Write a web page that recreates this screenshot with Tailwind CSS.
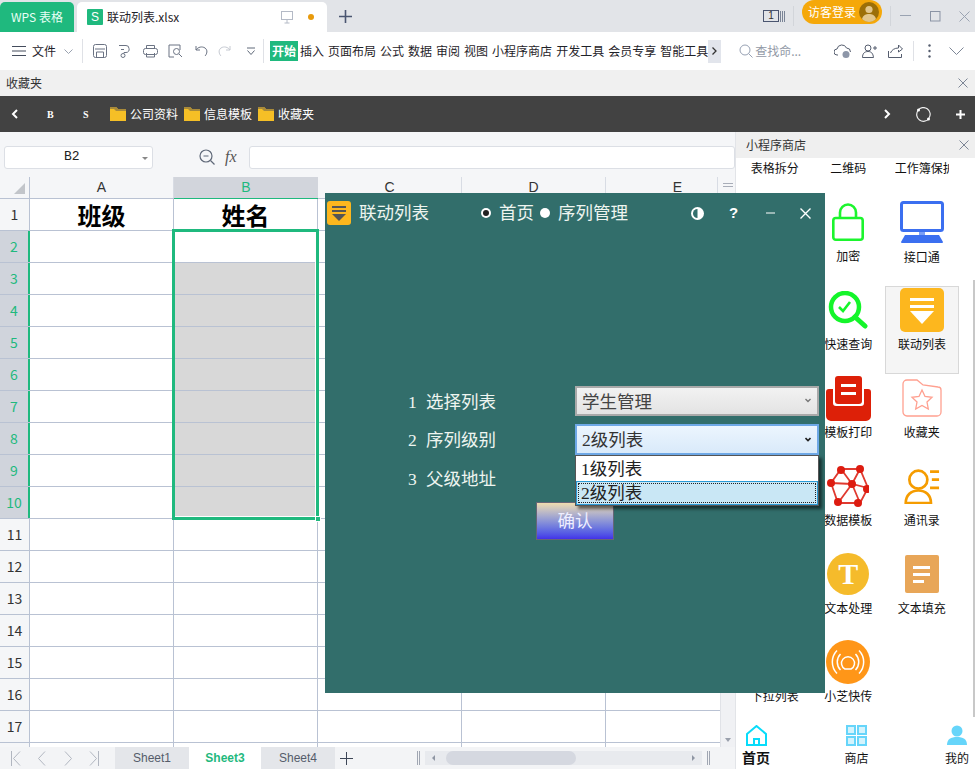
<!DOCTYPE html>
<html>
<head>
  <title>联动列表.xlsx</title>
  <meta charset="utf-8">
  <script src="https://cdn.jsdelivr.net/npm/@tailwindcss/browser@4"></script>
</head>
<body class="w-[975px] h-[769px] overflow-hidden relative bg-white font-['Noto_Sans_CJK_SC','Noto_Sans',sans-serif] text-[12px] text-[#1f2329]">

  <!-- Title bar -->
  <div class="h-[32px] bg-[#e2e4e8] flex items-end">
    <div class="w-[74px] h-[30px] bg-[#1fb97e] rounded-t-[5px] text-[#e8fff5] text-[12px] flex items-center justify-center">WPS 表格</div>
    <div class="ml-[3px] w-[250px] h-[30px] bg-white rounded-t-[5px] flex items-center pl-[10px]">
      <div class="w-[16px] h-[16px] bg-[#1fb97e] rounded-[1px] text-white text-[12px] leading-[16px] text-center font-['Liberation_Sans',sans-serif]">S</div>
      <span class="ml-[4px]">联动列表.xlsx</span>
      <svg class="ml-[102px]" width="12" height="14" viewBox="0 0 12 14" fill="none" stroke="#b4bac6"><rect x="0.5" y="1.5" width="11" height="8"/><path d="M6 10v3M3.5 13h5"/></svg>
      <div class="ml-[15px] w-[6px] h-[6px] rounded-full bg-[#e89a0c]"></div>
    </div>
    <svg class="ml-[12px] mb-[9px]" width="13" height="13" viewBox="0 0 13 13" stroke="#4a5570" stroke-width="1.6"><path d="M6.5 0v13M0 6.5h13"/></svg>
    <div class="ml-auto h-[32px] flex items-center relative">
      <div class="w-[16px] h-[12px] border border-[#4a5570] text-[10px] leading-[10px] text-center font-['Liberation_Sans',sans-serif] text-[#333]">1</div>
      <svg class="ml-[1px]" width="5" height="12" stroke="#7a8496"><path d="M0.5 1v11M2.5 1v11M4.5 1v11"/></svg>
      <div class="ml-[8px] w-px h-[20px] bg-[#d2d5da]"></div>
      <div class="ml-[8px] w-[80px] h-[24px] mb-[8px] bg-[#f5a80a] rounded-full flex items-center pl-[6px] text-white text-[12px]">
        访客登录
        <svg class="ml-[3px]" width="20" height="20" viewBox="0 0 20 20"><circle cx="10" cy="10" r="10" fill="#9c6f08"/><circle cx="10" cy="7.5" r="3.6" fill="#e2c68c"/><path d="M3 17c1-4 4-5 7-5s6 1 7 5c-4 4-10 4-14 0z" fill="#e2c68c"/></svg>
      </div>
      <div class="ml-[8px] w-px h-[20px] bg-[#d2d5da]"></div>
      <svg class="ml-[9px]" width="11" height="2"><path d="M0 .5h11" stroke="#9aa3b2"/></svg>
      <svg class="ml-[19px]" width="11" height="11" fill="none" stroke="#8b94a5"><rect x=".5" y=".5" width="9.5" height="9.5"/></svg>
      <svg class="ml-[18px] mr-[5px]" width="11" height="11" stroke="#9aa3b2"><path d="M.5.5l10 10M10.500.5l-10 10"/></svg>
    </div>
  </div>

  <!-- Toolbar -->
  <div class="h-[38px] bg-white flex items-center">
    <svg class="ml-[12px]" width="14" height="10" stroke="#444c5c"><path d="M0 .5h14M0 5h14M0 9.500h14"/></svg>
    <span class="ml-[6px]">文件</span>
    <svg class="ml-[8px]" width="9" height="5" fill="none" stroke="#9aa2b0"><path d="M.5.500l4 4 4-4"/></svg>
    <div class="ml-[9px] w-px h-[24px] bg-[#dfe1e6]"></div>
    <svg class="ml-[10px]" width="14" height="14" fill="none" stroke="#6b7383"><rect x=".5" y=".5" width="13" height="13" rx="2"/><path d="M2 5h10M3.500 13.500V8h7v5.500"/></svg>
    <svg class="ml-[11px]" width="14" height="14" fill="none" stroke="#6b7383"><path d="M1 1.500h7a3 3 0 0 1 3 3 3 3 0 0 1-3 4H6v1M3 5.500h3"/><circle cx="5" cy="11.500" r="2"/></svg>
    <svg class="ml-[11px]" width="15" height="14" fill="none" stroke="#6b7383"><rect x=".5" y="4.500" width="14" height="6" rx="2"/><path d="M3.500 4.500v-3h8v3M3.500 9v4h8V9"/></svg>
    <svg class="ml-[10px]" width="15" height="14" fill="none" stroke="#6b7383"><path d="M6 13H1V1h11v5"/><circle cx="8.500" cy="7.500" r="3"/><path d="M11 10l3 3"/></svg>
    <svg class="ml-[12px]" width="13" height="12" fill="none" stroke="#6b7383"><path d="M1 1v4h4M1 5c2-3 6-4 9-2 3 2 2 6 0 8"/></svg>
    <svg class="ml-[10px]" width="13" height="12" fill="none" stroke="#c6cad2"><path d="M12 1v4H8M12 5c-2-3-6-4-9-2-3 2-2 6 0 8"/></svg>
    <svg class="ml-[16px]" width="8" height="8" fill="none" stroke="#5f6878"><path d="M0 1h8M.5 3.500l3.500 4 3.500-4"/></svg>
    <div class="ml-[8px] w-px h-[24px] bg-[#dfe1e6]"></div>
    <div class="ml-[6px] w-[28px] h-[20px] bg-[#1fb97e] text-white font-bold flex items-center justify-center">开始</div>
    <div class="ml-[2px] flex gap-[4px] whitespace-nowrap">
      <span>插入</span><span>页面布局</span><span>公式</span><span>数据</span><span>审阅</span><span>视图</span><span>小程序商店</span><span>开发工具</span><span>会员专享</span><span>智能工具</span>
    </div>
    <div class="w-[13px] h-[23px] bg-[#e2e5ec] flex items-center justify-center">
      <svg width="5" height="8" fill="none" stroke="#333" stroke-width="1.3"><path d="M.5.500l3.500 3.500-3.500 3.500"/></svg>
    </div>
    <svg class="ml-[18px]" width="14" height="14" fill="none" stroke="#97a1b3"><circle cx="6" cy="6" r="5"/><path d="M9.500 9.500l4 4"/></svg>
    <span class="ml-[2px] w-[45px] whitespace-nowrap text-[#9299a6]">查找命...</span>
    <svg class="ml-[34px]" width="17" height="15" fill="none" stroke="#555d6e"><path d="M4 11H3a3 3 0 0 1 0-6 5 5 0 0 1 9.500-1 4 4 0 0 1 4 4"/><circle cx="12" cy="10.500" r="3.500" fill="#8d96a8" stroke="none"/></svg>
    <svg class="ml-[11px]" width="15" height="14" fill="none" stroke="#555d6e"><circle cx="6" cy="4" r="3"/><path d="M.5 13.500c0-4 2-6 5.500-6s5 2 5.500 6zM11 4h4M13 2v4"/></svg>
    <svg class="ml-[11px]" width="15" height="14" fill="none" stroke="#555d6e"><path d="M.5 7v6.500h13V10M2.500 9c1-3 4-5 8-5V1l4 4-4 3V6"/></svg>
    <div class="ml-[10px] w-px h-[20px] bg-[#dfe1e6]"></div>
    <svg class="ml-[14px]" width="3" height="14" fill="#555d6e"><circle cx="1.500" cy="1.500" r="1.200"/><circle cx="1.500" cy="7" r="1.200"/><circle cx="1.500" cy="12.500" r="1.200"/></svg>
    <svg class="ml-[18px]" width="15" height="8" fill="none" stroke="#7d8696"><path d="M.5.500l7 7 7-7"/></svg>
  </div>

  <!-- Favorites strip -->
  <div class="h-[26px] bg-[#f0f0f0] flex items-center justify-between px-[6px] text-[#333]">
    <span>收藏夹</span>
    <svg class="mr-[1px]" width="10" height="10" stroke="#7d8696"><path d="M.5.500l9 9M9.500.500l-9 9"/></svg>
  </div>

  <!-- Dark bookmark bar -->
  <div class="h-[36px] bg-[#424242] flex items-center text-white">
    <svg class="ml-[11px]" width="7" height="10" fill="none" stroke="#fff" stroke-width="2"><path d="M6 1L2 5l4 4"/></svg>
    <span class="ml-[29px] w-[7px] text-[10px] font-bold font-['Liberation_Serif',serif]">B</span>
    <span class="ml-[29px] w-[7px] text-[10px] font-bold font-['Liberation_Serif',serif]">S</span>
    <svg class="ml-[20px]" width="16" height="14" viewBox="0 0 16 14"><path d="M0 0h6l2 2h8v12H0z" fill="#f5bf26"/><path d="M0 0h6l2 2h8v2H6L4 2H0z" fill="#a88a3a"/></svg>
    <span class="ml-[4px]">公司资料</span>
    <svg class="ml-[6px]" width="16" height="14" viewBox="0 0 16 14"><path d="M0 0h6l2 2h8v12H0z" fill="#f5bf26"/><path d="M0 0h6l2 2h8v2H6L4 2H0z" fill="#a88a3a"/></svg>
    <span class="ml-[4px]">信息模板</span>
    <svg class="ml-[6px]" width="16" height="14" viewBox="0 0 16 14"><path d="M0 0h6l2 2h8v12H0z" fill="#f5bf26"/><path d="M0 0h6l2 2h8v2H6L4 2H0z" fill="#a88a3a"/></svg>
    <span class="ml-[4px]">收藏夹</span>
    <svg class="ml-auto" width="7" height="10" fill="none" stroke="#fff" stroke-width="2"><path d="M1 1l4 4-4 4"/></svg>
    <svg class="ml-[25px]" width="15" height="15" fill="none" stroke="#eee" stroke-width="1.2"><path d="M2 3.500a6.500 6.500 0 0 1 11 7.500M13 11.500a6.500 6.500 0 0 1-11-8"/><circle cx="2.500" cy="3" r="1.500" fill="#fff" stroke="none"/><circle cx="12.500" cy="12" r="1.500" fill="#fff" stroke="none"/></svg>
    <svg class="ml-[25px] mr-[10px]" width="9" height="9" stroke="#fff" stroke-width="2"><path d="M4.500 0v9M0 4.500h9"/></svg>
  </div>

  <!-- Workspace -->
  <div class="flex h-[637px]">
    <div class="w-[735px] flex flex-col bg-[#f5f6f8]">
      <!-- Formula bar -->
      <div class="h-[45px] flex items-center pt-[5px]">
        <div class="ml-[4px] w-[149px] h-[23px] bg-white border border-[#dcdfe5] rounded-[3px] flex items-center relative font-['Liberation_Mono',monospace] text-[13px] text-[#222] pl-[59px]">
          <span>B2</span>
          <div class="absolute right-[4px] top-[10px] w-0 h-0 border-x-[3px] border-x-transparent border-t-[3px] border-t-[#888]"></div>
        </div>
        <svg class="ml-[46px]" width="16" height="16" fill="none" stroke="#5f6878" stroke-width="1.2"><circle cx="7" cy="7" r="6"/><path d="M4.500 7h5M11.500 11.500l4 4"/></svg>
        <span class="ml-[10px] w-[16px] text-[16px] italic font-['Liberation_Serif',serif] text-[#555]">fx</span>
        <div class="ml-[8px] w-[486px] h-[23px] bg-white border border-[#dcdfe5] rounded-[3px]"></div>
      </div>
      <!-- Sheet -->
      <div id="sheet" class="flex-1 relative overflow-hidden bg-white">
        <div class="flex h-[22px] bg-[#f5f6f8] border-b border-[#b9c2d3] text-[14px] text-[#333] font-['Liberation_Sans',sans-serif]">
          <div class="w-[30px] border-r border-[#b9c2d3] relative">
            <div class="absolute right-[4px] bottom-[4px] w-0 h-0 border-l-[11px] border-l-transparent border-b-[11px] border-b-[#c2c5ca]"></div>
          </div>
          <div class="w-[144px] border-r border-[#d8dce4] flex items-center justify-center">A</div>
          <div class="w-[144px] bg-[#d2d5dc] border-b border-[#1fb97e] h-[22px] flex items-center justify-center text-[#1fb97e]">B</div>
          <div class="w-[144px] border-r border-[#d8dce4] flex items-center justify-center">C</div>
          <div class="w-[144px] border-r border-[#d8dce4] flex items-center justify-center">D</div>
          <div class="w-[112px] pl-[32px] border-r border-[#d8dce4] flex items-center justify-center">E</div>
          <div class="w-[15px] pt-[6px] pl-[5px]"><div class="h-[4px] w-[10px] border-y border-[#a8adb8]"></div></div>
        </div>
        <div id="rows"></div>
        <!-- Selection -->
        <div class="absolute left-[172px] top-[52px] w-[147px] h-[291px] border-[3px] border-[#1fb97e]"></div>
        <div class="absolute left-[175px] top-[55px] w-[141px] h-[285px] border-r border-b border-white"></div>
        <div class="absolute left-[315px] top-[339px] w-[6px] h-[6px] bg-[#1fb97e] border border-white"></div>
        <!-- Vertical scrollbar -->
        <div class="absolute left-[720px] top-[22px] w-[15px] h-[548px] bg-[#f0f1f4] border-l border-[#e0e2e7]">
          <div class="absolute left-[4px] bottom-[5px] w-0 h-0 border-x-[3px] border-x-transparent border-t-[4px] border-t-[#9aa0ac]"></div>
        </div>
      </div>
      <!-- Sheet tabs -->
      <div class="h-[22px] bg-[#f3f4f6] flex items-center text-[12px] font-['Liberation_Sans',sans-serif] text-[#555c6a]">
        <svg class="ml-[11px]" width="10" height="15" fill="none" stroke="#b1b6c0"><path d="M.5 0v15M9 .5L2.500 7.500 9 14.500"/></svg>
        <svg class="ml-[17px]" width="8" height="15" fill="none" stroke="#b1b6c0"><path d="M7 .5L.500 7.500l6.500 7"/></svg>
        <svg class="ml-[18px]" width="8" height="15" fill="none" stroke="#b1b6c0"><path d="M1 .5l6.500 7-6.500 7"/></svg>
        <svg class="ml-[17px]" width="10" height="15" fill="none" stroke="#b1b6c0"><path d="M9.500 0v15M1 .5l6.500 7-6.500 7"/></svg>
        <div class="ml-[16px] w-[74px] h-[22px] bg-[#e4e6ea] flex items-center justify-center">Sheet1</div>
        <div class="w-[72px] h-[22px] bg-white text-[#1fb97e] font-bold flex items-center justify-center">Sheet3</div>
        <div class="w-[74px] h-[22px] bg-[#e4e6ea] flex items-center justify-center">Sheet4</div>
        <svg class="ml-[5px]" width="13" height="13" stroke="#3d4657"><path d="M6.500 0v13M0 6.500h13"/></svg>
        <svg class="ml-[64px]" width="3" height="14" stroke="#a0a6b2"><path d="M.5 0v14M2.500 0v14"/></svg>
        <div class="ml-[5px] w-[277px] h-[14px] bg-[#e8eaee] relative">
          <div class="absolute left-[21px] top-0 w-[130px] h-[14px] bg-[#d5d8e0] rounded-full"></div>
          <div class="absolute left-[7px] top-[4px] w-0 h-0 border-y-[3px] border-y-transparent border-r-[3px] border-r-[#8f96a3]"></div>
          <div class="absolute right-[7px] top-[4px] w-0 h-0 border-y-[3px] border-y-transparent border-l-[3px] border-l-[#8f96a3]"></div>
        </div>
        <svg class="ml-[5px]" width="3" height="14" stroke="#a0a6b2"><path d="M.5 0v14M2.500 0v14"/></svg>
      </div>
    </div>

    <!-- Right panel -->
    <div class="w-[240px] flex flex-col border-l border-[#e2e4e8] relative text-[#111]">
      <div class="h-[26px] bg-[#efefef] flex items-center justify-between pl-[10px] pr-[6px] text-[#333] shrink-0">
        <span>小程序商店</span>
        <svg width="10" height="10" stroke="#7d8696"><path d="M.5.500l9 9M9.500.500l-9 9"/></svg>
      </div>
      <div class="flex-1 overflow-hidden relative">
        <div class="grid grid-cols-[73.500px_73.500px_73.500px] auto-rows-[88px] ml-[2px] mt-[-48px]">
          <!-- Row 1 -->
          <div class="flex flex-col items-center pt-[49px]"><span>表格拆分</span></div>
          <div class="flex flex-col items-center pt-[49px]"><span>二维码</span></div>
          <div class="flex flex-col items-center pt-[49px]"><span class="w-[54px] overflow-hidden whitespace-nowrap">工作簿保护</span></div>
          <!-- Row 2 -->
          <div></div>
          <div class="flex flex-col items-center">
            <svg class="mt-[5px]" width="32" height="38" viewBox="0 0 32 38" fill="none" stroke="#1cf52e" stroke-width="2.600"><rect x="1.300" y="15" width="29.400" height="21.700" rx="2.500"/><path d="M8 15V9.500a8 8 0 0 1 16 0V15"/></svg>
            <span class="mt-[6px]">加密</span>
          </div>
          <div class="flex flex-col items-center">
            <svg class="mt-[3px]" width="44" height="42" viewBox="0 0 44 42"><rect x="1.500" y="1.500" width="41" height="28" rx="2" fill="#fff" stroke="#3b6ff0" stroke-width="3"/><path d="M19 31h6v3h-6z" fill="#7b9ff5"/><path d="M5 34h34l4 7a1 1 0 0 1-1 1H2a1 1 0 0 1-1-1z" fill="#3b6ff0"/></svg>
            <span class="mt-[5px]">接口通</span>
          </div>
          <!-- Row 3 -->
          <div></div>
          <div class="flex flex-col items-center">
            <svg class="mt-[5px]" width="40" height="38" viewBox="0 0 40 38" fill="none"><circle cx="17" cy="16" r="14" stroke="#14f52a" stroke-width="4.500"/><path d="M27 26l10 9" stroke="#14f52a" stroke-width="5" stroke-linecap="round"/><path d="M11 16l4 4 7-9" stroke="#14f52a" stroke-width="2.600"/></svg>
            <span class="mt-[6px]">快速查询</span>
          </div>
          <div class="flex flex-col items-center bg-[#f5f5f5] border border-[#d8d8d8] w-[74px] h-[88px]">
            <svg class="mt-[1px]" width="44" height="44" viewBox="0 0 44 44"><rect width="44" height="44" rx="5" fill="#fdb71e"/><path d="M10 10h24v3H10zM10 17h24v3H10z" fill="#fff"/><path d="M10 23h24L22 36z" fill="#fff"/></svg>
            <span class="mt-[3px]">联动列表</span>
          </div>
          <!-- Row 4 -->
          <div></div>
          <div class="flex flex-col items-center">
            <svg class="mt-[2px]" width="45" height="45" viewBox="0 0 45 45"><path d="M9 3a3 3 0 0 1 3-3h21a3 3 0 0 1 3 3v22a3 3 0 0 1-3 3H12a3 3 0 0 1-3-3z" fill="#dd2008"/><path d="M15 8h15v3H15zM15 16h15v3H15z" fill="#fff"/><path d="M0 16a3 3 0 0 1 3-3h4v14a3 3 0 0 0 3 3h25a3 3 0 0 0 3-3V13h4a3 3 0 0 1 3 3v24a5 5 0 0 1-5 5H5a5 5 0 0 1-5-5z" fill="#dd2008"/></svg>
            <span class="mt-[2px]">模板打印</span>
          </div>
          <div class="flex flex-col items-center">
            <svg class="mt-[5px]" width="40" height="39" viewBox="0 0 40 39" fill="none" stroke="#ffa090" stroke-width="1.300"><path d="M1 5a4 4 0 0 1 4-4h10l6 5 15 2a3 3 0 0 1 3 3v22a4 4 0 0 1-4 4H5a4 4 0 0 1-4-4z"/><path d="M20 11l3 6.500 7 .8-5 4.700 1.300 7-6.300-3.500-6.300 3.500 1.300-7-5-4.700 7-.8z"/></svg>
            <span class="mt-[5px]">收藏夹</span>
          </div>
          <!-- Row 5 -->
          <div></div>
          <div class="flex flex-col items-center">
            <svg class="mt-[3px]" width="42" height="42" viewBox="0 0 42 42" fill="none" stroke="#e03a30" stroke-width="1.800"><path d="M14 4l19 0 8 19-8 15-22 0-7-20zM4 18l21 1 16 4M25 19l8-15M25 19l8 19M14 4l11 15M11 38l14-19"/><g fill="#dd1c10" stroke="none"><circle cx="14" cy="5" r="4"/><circle cx="33" cy="4" r="4"/><circle cx="4" cy="18" r="4"/><circle cx="25" cy="19" r="4"/><circle cx="40" cy="24" r="4"/><circle cx="11" cy="37" r="4"/><circle cx="31" cy="38" r="4"/></g></svg>
            <span class="mt-[4px]">数据模板</span>
          </div>
          <div class="flex flex-col items-center">
            <svg class="mt-[6px]" width="39" height="36" viewBox="0 0 39 40" fill="none" stroke="#f59c00" stroke-width="3"><circle cx="16" cy="13" r="10"/><path d="M2 39c0-9 6-14 14-14s14 5 14 14H2z"/><path d="M29 4h10M31 13h8M29 22h10"/></svg>
            <span class="mt-[7px]">通讯录</span>
          </div>
          <!-- Row 6 -->
          <div></div>
          <div class="flex flex-col items-center">
            <div class="mt-[3px] w-[42px] h-[42px] rounded-full bg-[#f5bb2b] text-white text-[30px] font-bold leading-[42px] text-center font-['Liberation_Serif',serif]">T</div>
            <span class="mt-[4px]">文本处理</span>
          </div>
          <div class="flex flex-col items-center">
            <svg class="mt-[5px]" width="34" height="38" viewBox="0 0 34 38"><rect width="34" height="38" rx="2" fill="#e8a658"/><path d="M8 11h17v3H8zM8 18h17v3H8zM8 25h11v3H8z" fill="#fff"/></svg>
            <span class="mt-[6px]">文本填充</span>
          </div>
          <!-- Row 7 -->
          <div class="flex flex-col items-center pt-[49px]"><span>下拉列表</span></div>
          <div class="flex flex-col items-center">
            <svg class="mt-[2px]" width="44" height="44" viewBox="0 0 44 44" fill="none" stroke="#fff" stroke-width="1.500"><circle cx="22" cy="22" r="22" fill="#ff9618" stroke="none"/><path d="M19 29a6.500 6.500 0 1 1 6 0M18 29h8"/><path d="M14.500 14a11.500 11.500 0 0 0 0 16M29.500 14a11.500 11.500 0 0 1 0 16M11 10.500a16.500 16.500 0 0 0 0 23M33 10.500a16.500 16.500 0 0 1 0 23"/></svg>
            <span class="mt-[3px]">小芝快传</span>
          </div>
          <div></div>
        </div>
        <div class="absolute right-0 top-[122px] w-[2px] h-[437px] bg-[#c8c8c8]"></div>
      </div>
      <!-- Bottom nav -->
      <div class="h-[51px] shrink-0 bg-white flex justify-between pl-[6px] pr-[4px] pt-[7px]">
        <div class="w-[28px] flex flex-col items-center">
          <svg width="21" height="21" viewBox="0 0 21 21" fill="none" stroke="#08dcfa" stroke-width="2"><path d="M1 9l9.500-8L20 9v11H1zM8 20v-6h5v6"/></svg>
          <span class="mt-[2px] text-[14px] font-bold leading-[18px]">首页</span>
        </div>
        <div class="w-[28px] flex flex-col items-center">
          <svg width="21" height="21" viewBox="0 0 21 21" fill="#d4f3fc" stroke="#66d5fa" stroke-width="2"><rect x="1" y="1" width="8" height="8"/><rect x="12" y="1" width="8" height="8"/><rect x="1" y="12" width="8" height="8"/><rect x="12" y="12" width="8" height="8"/></svg>
          <span class="mt-[3px] leading-[18px] text-[12px]">商店</span>
        </div>
        <div class="w-[28px] flex flex-col items-center">
          <svg width="20" height="20" viewBox="0 0 20 20" fill="#66d5fa"><circle cx="10" cy="6" r="5.500"/><path d="M0 20c0-6 4-8 10-8s10 2 10 8z"/></svg>
          <span class="mt-[4px] leading-[18px] text-[12px]">我的</span>
        </div>
      </div>
    </div>
  </div>

  <!-- Floating dialog -->
  <div class="absolute left-[325px] top-[193px] w-[500px] h-[500px] bg-[#326e6b] text-[#eef5f0] font-['Liberation_Serif','Noto_Sans_CJK_SC',serif] text-[17.500px]">
    <div class="h-[40px] flex items-center relative">
      <svg class="ml-[2px]" width="24" height="24" viewBox="0 0 24 24"><rect width="24" height="24" rx="3" fill="#fdb71e"/><path d="M5 5h14v2H5zM5 9h14v2H5z" fill="#555"/><path d="M5 13h14l-7 7z" fill="#555"/></svg>
      <span class="ml-[8px]">联动列表</span>
      <div class="ml-[52px] w-[10px] h-[10px] rounded-full bg-white flex items-center justify-center"><div class="w-[6px] h-[6px] rounded-full bg-[#222]"></div></div>
      <span class="ml-[8px]">首页</span>
      <div class="ml-[6px] w-[10px] h-[10px] rounded-full bg-white"></div>
      <span class="ml-[8px]">序列管理</span>
      <svg class="ml-[63px]" width="13" height="13" viewBox="0 0 13 13"><circle cx="6.500" cy="6.500" r="6.500" fill="#fff"/><path d="M6.500 2a4.500 4.500 0 0 0 0 9z" fill="#326e6b"/></svg>
      <span class="ml-[25px] w-[10px] text-[15px] font-bold text-white font-['Liberation_Sans',sans-serif]">?</span>
      <svg class="ml-[27px]" width="10" height="2"><path d="M0 1h9" stroke="#fff"/></svg>
      <svg class="ml-[24px]" width="11" height="11" stroke="#fff" stroke-width="1.400"><path d="M.5.500l10 10M10.500.5l-10 10"/></svg>
    </div>
    <div class="pt-[153px] pl-[83px] relative">
      <div class="flex items-center h-[30px]">
        <span class="w-[18px] pt-[2px]">1</span><span class="w-[149px] pt-[2px]">选择列表</span>
        <div class="w-[244px] h-[30px] border-2 border-[#a9a9a9] bg-linear-to-b from-[#f2f2f2] to-[#e3e3e3] text-[#444] flex items-center pl-[5px] relative">
          <span class="pt-[2px]">学生管理</span>
          <svg class="absolute right-[6px] top-[10px]" width="6" height="5" fill="none" stroke="#777" stroke-width="1.400"><path d="M.5 1L3 3.500 5.500 1"/></svg>
        </div>
      </div>
      <div class="flex items-center h-[31px] mt-[8px]">
        <span class="w-[18px] pt-[2px]">2</span><span class="w-[149px] pt-[2px]">序列级别</span>
        <div class="w-[244px] h-[31px] border-2 border-[#6ea8e6] bg-linear-to-b from-[#ecf5fe] to-[#d9eafa] text-[#333] flex items-center pl-[5px] relative">
          <span class="pt-[2px]">2级列表</span>
          <svg class="absolute right-[6px] top-[11px]" width="6" height="5" fill="none" stroke="#222" stroke-width="1.600"><path d="M.5 1L3 3.500 5.500 1"/></svg>
        </div>
      </div>
      <div class="flex items-center h-[31px] mt-[8px]">
        <span class="w-[18px] pt-[2px]">3</span><span class="w-[149px] pt-[2px]">父级地址</span>
      </div>
      <div class="mt-[8px] ml-[128px] w-[78px] h-[38px] border border-[#667] bg-linear-to-b from-[#f0dcae] to-[#4430e8] flex items-center justify-center text-[#eef]">确认</div>
      <!-- Open dropdown -->
      <div class="absolute left-[250px] top-[222px] w-[244px] h-[51px] bg-white border border-[#555] shadow-[3px_3px_3px_rgba(0,0,0,0.55)] text-[#222]">
        <div class="h-[25px] pl-[5px] flex items-center"><span class="pt-[2px]">1级列表</span></div>
        <div class="h-[24px] bg-[#c9e7f5] border border-[#2b9bd6] pl-[4px] flex items-center relative">
          2级列表
          <div class="absolute inset-[1px] border border-dotted border-[#222]"></div>
        </div>
      </div>
    </div>
  </div>

  <script>
    // Build spreadsheet rows
    var rows = document.getElementById('rows');
    var html = '';
    for (var i = 1; i <= 18; i++) {
      var active = i >= 2 && i <= 10;
      var selected = i >= 3 && i <= 10;
      html += '<div class="flex h-[32px] border-b border-[#b9c2d3]">';
      html += '<div class="w-[30px] flex items-center justify-center text-[14px] font-[\'Roboto\',sans-serif] ' +
        (active ? 'bg-[#d0d4dc] text-[#1fb97e] border-r-2 border-[#1fb97e]' : 'bg-[#f5f6f8] text-[#333] border-r border-[#b9c2d3]') + '">' + (i < 18 ? i : '') + '</div>';
      html += '<div class="w-[144px] border-r border-[#b9c2d3] flex items-center justify-center text-[24px] font-bold text-black">' + (i == 1 ? '班级' : '') + '</div>';
      html += '<div class="w-[144px] border-r border-[#b9c2d3] flex items-center justify-center text-[24px] font-bold text-black ' + (selected ? 'bg-[#d8d8d8]' : '') + '">' + (i == 1 ? '姓名' : '') + '</div>';
      html += '<div class="w-[144px] border-r border-[#b9c2d3]"></div>';
      html += '<div class="w-[144px] border-r border-[#b9c2d3]"></div>';
      html += '</div>';
    }
    rows.innerHTML = html;
  </script>
</body>
</html>
